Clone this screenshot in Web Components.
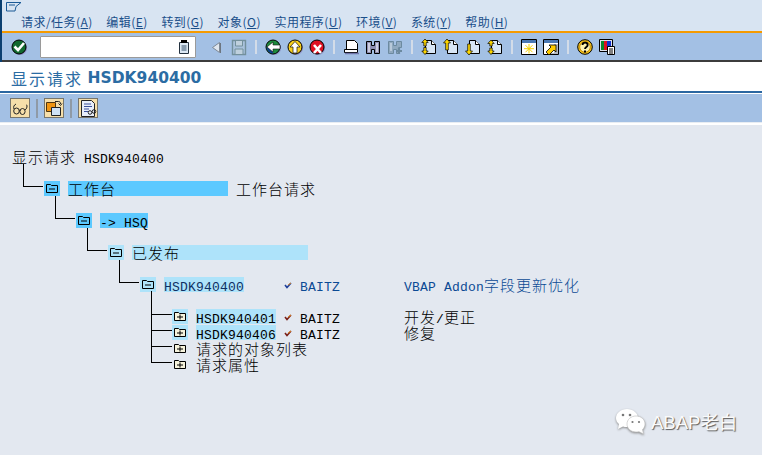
<!DOCTYPE html>
<html lang="zh">
<head>
<meta charset="utf-8">
<title>显示请求</title>
<style>
  html, body { margin: 0; height: 100%; background: #e3e8f0; overflow: hidden; }
</style>
</head>
<body>
<sap-window>
  <sap-menubar slot="top">
    <sap-menu>请求/任务(<u>A</u>)</sap-menu>
    <sap-menu>编辑(<u>E</u>)</sap-menu>
    <sap-menu>转到(<u>G</u>)</sap-menu>
    <sap-menu>对象(<u>O</u>)</sap-menu>
    <sap-menu>实用程序(<u>U</u>)</sap-menu>
    <sap-menu>环境(<u>V</u>)</sap-menu>
    <sap-menu>系统(<u>Y</u>)</sap-menu>
    <sap-menu>帮助(<u>H</u>)</sap-menu>
  </sap-menubar>

  <sap-toolbar slot="top">
    <sap-icon name="ok"></sap-icon>
    <sap-command></sap-command>
    <sap-icon name="tri" style="margin-left:7px"></sap-icon>
    <sap-icon name="save"></sap-icon>
    <sap-sep></sap-sep>
    <sap-icon name="back"></sap-icon>
    <sap-icon name="up"></sap-icon>
    <sap-icon name="cancel"></sap-icon>
    <sap-sep></sap-sep>
    <sap-icon name="print"></sap-icon>
    <sap-icon name="find"></sap-icon>
    <sap-icon name="findnext"></sap-icon>
    <sap-sep></sap-sep>
    <sap-icon name="first"></sap-icon>
    <sap-icon name="prev"></sap-icon>
    <sap-icon name="next"></sap-icon>
    <sap-icon name="last"></sap-icon>
    <sap-sep></sap-sep>
    <sap-icon name="session"></sap-icon>
    <sap-icon name="shortcut"></sap-icon>
    <sap-sep></sap-sep>
    <sap-icon name="help"></sap-icon>
    <sap-icon name="layout"></sap-icon>
  </sap-toolbar>

  <sap-title>显示请求 <b>HSDK940400</b></sap-title>

  <sap-appbar>
    <sap-button name="glasses"></sap-button>
    <sap-sep dark></sap-sep>
    <sap-button name="swap"></sap-button>
    <sap-sep dark></sap-sep>
    <sap-button name="docglasses"></sap-button>
  </sap-appbar>

  <sap-tree>
    <tree-row>
      <tree-cell col="0" span="30"><tree-han>显示请求</tree-han> HSDK940400</tree-cell>
    </tree-row>
    <tree-row></tree-row>

    <tree-row>
      <tree-link col="1" width="20" rise="17" height="22"></tree-link>
      <tree-cell col="4" span="2" tone="strong"><sap-icon name="folder"></sap-icon></tree-cell>
      <tree-cell col="7" span="20" tone="strong"><tree-han>工作台</tree-han></tree-cell>
      <tree-cell col="28" span="20"><tree-han>工作台请求</tree-han></tree-cell>
    </tree-row>
    <tree-row></tree-row>

    <tree-row>
      <tree-link col="5" width="20" rise="17" height="22"></tree-link>
      <tree-cell col="8" span="2" tone="strong"><sap-icon name="folder"></sap-icon></tree-cell>
      <tree-cell col="11" span="6" tone="strong">-&gt; HSQ</tree-cell>
    </tree-row>
    <tree-row></tree-row>

    <tree-row>
      <tree-link col="9" width="20" rise="17" height="22"></tree-link>
      <tree-cell col="12" span="2" tone="light"><sap-icon name="folder"></sap-icon></tree-cell>
      <tree-cell col="15" span="22" tone="light"><tree-han>已发布</tree-han></tree-cell>
    </tree-row>
    <tree-row></tree-row>

    <tree-row>
      <tree-link col="13" width="20" rise="17" height="22"></tree-link>
      <tree-cell col="16" span="2" tone="light"><sap-icon name="folder"></sap-icon></tree-cell>
      <tree-cell col="19" span="10" tone="light" ink="#0d2f63">HSDK940400</tree-cell>
      <tree-cell col="34" span="1"><sap-icon name="tickblue"></sap-icon></tree-cell>
      <tree-cell col="36" span="5" ink="#0b4a94">BAITZ</tree-cell>
      <tree-cell col="49" span="26" ink="#0b4a94">VBAP Addon<tree-han>字段更新优化</tree-han></tree-cell>
    </tree-row>
    <tree-row></tree-row>

    <tree-row>
      <tree-link col="17" width="21" rise="18" height="23"></tree-link>
      <tree-cell col="20" span="2" tone="light"><sap-icon name="folderplus"></sap-icon></tree-cell>
      <tree-cell col="23" span="10" tone="light">HSDK940401</tree-cell>
      <tree-cell col="34" span="1"><sap-icon name="tickred"></sap-icon></tree-cell>
      <tree-cell col="36" span="5">BAITZ</tree-cell>
      <tree-cell col="49" span="10"><tree-han>开发</tree-han>/<tree-han>更正</tree-han></tree-cell>
    </tree-row>
    <tree-row>
      <tree-link col="17" width="21" rise="11" height="16"></tree-link>
      <tree-cell col="20" span="2" tone="light"><sap-icon name="folderplus"></sap-icon></tree-cell>
      <tree-cell col="23" span="10" tone="light">HSDK940406</tree-cell>
      <tree-cell col="34" span="1"><sap-icon name="tickred"></sap-icon></tree-cell>
      <tree-cell col="36" span="5">BAITZ</tree-cell>
      <tree-cell col="49" span="10"><tree-han>修复</tree-han></tree-cell>
    </tree-row>
    <tree-row>
      <tree-link col="17" width="21" rise="11" height="16"></tree-link>
      <tree-cell col="20" span="2"><sap-icon name="folderplus"></sap-icon></tree-cell>
      <tree-cell col="23" span="20"><tree-han>请求的对象列表</tree-han></tree-cell>
    </tree-row>
    <tree-row>
      <tree-link col="17" width="21" rise="11" height="16"></tree-link>
      <tree-cell col="20" span="2"><sap-icon name="folderplus"></sap-icon></tree-cell>
      <tree-cell col="23" span="20"><tree-han>请求属性</tree-han></tree-cell>
    </tree-row>
  </sap-tree>

  <wechat-mark>ABAP老白</wechat-mark>
</sap-window>

<script>
const K = 'stroke="#000" stroke-width="1"';
const pageShape = 'M4.5 1.5h6l4 4v9h-10z';
const fold = '<path d="M10.5 1.5v4h4" fill="#fff" stroke="#000"/>';
const ICONS = {
  ok: `<circle cx="9" cy="9" r="7" fill="#8b8fc4"/><circle cx="8" cy="8" r="7" fill="#11692f" ${K}/><path d="M3.500 7.500l3.500 3.500 6-7" fill="none" stroke="#fff" stroke-width="2.600"/>`,
  tri: `<path d="M10.500 3.500v10l-7-5z" fill="#dfe6ee" stroke="#7d8894"/><path d="M11.500 4v10" stroke="#6d7680"/>`,
  save: `<path d="M1.500 1.500h13v14h-13z" fill="#a9c2dc" stroke="#73909c" stroke-width="1.400"/><path d="M4.500 2v5h7V2M4 15v-5h8v5" fill="#bfd0dd" stroke="#73909c"/>`,
  back: `<circle cx="9" cy="9" r="7" fill="#8b8fc4"/><circle cx="8" cy="8" r="7" fill="#1d8a3c" ${K}/><path d="M1.500 8a6.500 6.500 0 0 0 6.500 6.500V8z" fill="#0b3f86"/><path d="M2 8l6-5v3h7v4H8v3z" fill="#fff" stroke="#111" stroke-width=".6"/>`,
  up: `<circle cx="9" cy="9" r="7" fill="#8b8fc4"/><circle cx="8" cy="8" r="7" fill="#f8cf1c" ${K}/><path d="M8 2.500l5 5.500h-3v6H6V8H3z" fill="#fff" stroke="#111" stroke-width=".7"/>`,
  cancel: `<circle cx="9" cy="9" r="7" fill="#8b8fc4"/><circle cx="8" cy="8" r="7" fill="#df1122" ${K}/><path d="M5 6l7 8M12 6l-7 8" stroke="#fff" stroke-width="2.600"/>`,
  print: `<path d="M3.500 1.500h8l3 3v7h-11z" fill="#fff" ${K}/><path d="M1.500 10.500h13v3h-13z" fill="#fff" ${K}/><path d="M2 14.500h14" stroke="#6f74a8" stroke-width="1.500"/>`,
  find: `<path d="M1.500 2.500h5v4h3v-4h5v12h-5v-4h-3v4h-5z" fill="#8d8db0" ${K}/><path d="M4 4v9M12 4v9" stroke="#e8e8f2" stroke-width="1.400"/>`,
  findnext: `<path d="M1.500 2.500h5v4h3v-4h5v6h-3v6h-2v-4h-3v4h-5z" fill="#90a9bf" stroke="#6c8aa0"/><path d="M12 9v6M9 12h6" stroke="#6c8aa0" stroke-width="2.200"/><path d="M4 4v8" stroke="#cbd8e5" stroke-width="1.400"/>`,
  first: `<path d="${pageShape}" fill="#d8e6f5" ${K}/>${fold}<path d="M4 0L.8 3.500h2V7h2.400V3.500h2zM4 15.500L.8 12h2V8.500h2.400V12h2z" fill="#ffd800" stroke="#000" stroke-width=".7"/>`,
  prev: `<path d="${pageShape}" fill="#d8e6f5" ${K}/>${fold}<path d="M4 0L.5 4h2.200v7h2.600V4h2.200z" fill="#ffd800" stroke="#000" stroke-width=".7"/>`,
  next: `<path d="${pageShape}" fill="#d8e6f5" ${K}/>${fold}<path d="M4 16L.5 12h2.200V5h2.600v7h2.200z" fill="#ffd800" stroke="#000" stroke-width=".7"/>`,
  last: `<path d="${pageShape}" fill="#d8e6f5" ${K}/>${fold}<path d="M4 1L.8 4.500h2V7h2.400V4.500h2zM4 15.500L.8 12h2V9h2.400v3h2z" fill="#ffd800" stroke="#000" stroke-width=".7"/>`,
  session: `<path d="M.5.500h15v15H.5z" fill="#fff" ${K}/><path d="M1 1h14v3H1z" fill="#4a78b4"/><path d="M8 5v9.500M3 9.700h10M4.500 6.200l7 7M11.500 6.200l-7 7" stroke="#f5d000"/>`,
  shortcut: `<path d="M.5.500h15v15H.5z" fill="#fff" ${K}/><path d="M1 1h14v3H1z" fill="#4a78b4"/><path d="M11 5h4v10H5v-1h6z" fill="#b5b9c0"/><path d="M3 13l5-5-2-2h7v7l-2-2-5 5z" fill="#fc0" stroke="#000" stroke-width=".8"/>`,
  help: `<circle cx="8" cy="8" r="7.300" fill="#f8c61c" ${K}/><circle cx="8" cy="8" r="5.300" fill="#fff3b0" stroke="#c48800"/><path d="M5.500 6c0-3.200 5.200-3.200 5.200 0 0 2-2.700 2-2.700 4" fill="none" stroke="#000" stroke-width="1.800"/><path d="M7 11.500h2v2H7z"/>`,
  layout: `<path d="M.5.500h13v12H.5z" fill="#dfe3ee" ${K}/><path d="M2 2h3v9H2z" fill="#0a8a2a"/><path d="M5 2h3v9H5z" fill="#e01020"/><path d="M8 2h4v9H8z" fill="#1030d0"/><path d="M8.500 7.500h7v8h-7z" fill="#fff" ${K}/><path d="M10 10h4M10 12h4M10 14h4" stroke="#000"/>`,
  doc: `<path d="M3.500 3.500h9v11h-9z" fill="#dce8f4" stroke="#23313f"/><path d="M5 1h6v3H5z" fill="#000"/><path d="M5.500 7h5M5.500 9h5M5.500 11h5" stroke="#35506a"/>`,
  glasses: `<ellipse cx="5.500" cy="12" rx="2.800" ry="3" fill="none" stroke="#222"/><ellipse cx="11.500" cy="12.500" rx="2.600" ry="3" fill="none" stroke="#222"/><path d="M8.300 11.500c.5-.6 .8-.6 1 0M3 10c-1-2 0-4 2-5M14 11c1.500-1 2-2.500 2-4 0-1-.5-1-1-1" fill="none" stroke="#222"/>`,
  swap: `<path d="M1.500 3.500h9v9h-9z" fill="#f09410" stroke="#4d3510"/><path d="M6.500 8.500h9v8h-9z" fill="#cfe2f5" stroke="#222"/><path d="M10 2.500h3.500c1.500 0 2 1 2 2.500M13.500 4.500l2 2 1.500-2" fill="none" stroke="#222"/>`,
  docglasses: `<path d="M2.500 1.500h10l3 3v13h-13z" fill="#e8eefa" stroke="#222"/><path d="M5 5h7M5 7.500h8M5 10h5M5 12.500h4" stroke="#3a4f9a"/><circle cx="11" cy="13.500" r="1.800" fill="none" stroke="#222"/><circle cx="15" cy="12.500" r="1.800" fill="none" stroke="#222"/>`,
  folder: `<path d="M2.500 3.500h4l1 1h6v7h-11z" fill="none" ${K}/><path d="M5 8h6" stroke="#000"/>`,
  folderplus: `<path d="M2.500 3.500h4l1 1h6v7h-11z" fill="#f6f3dc" ${K}/><path d="M5 8h6M8 5.500v5" stroke="#000"/>`,
  tickblue: `<path d="M1 8l2 2.500L7 6" fill="none" stroke="#1f3f9a" stroke-width="1.600"/><path d="M4 8l3-2" stroke="#e08a20"/>`,
  tickred: `<path d="M1 8l2 2.500L7 6" fill="none" stroke="#7a2018" stroke-width="1.600"/><path d="M4 8l3-2" stroke="#e08a20"/>`
};

// tiny helper so each element just states its css and markup
class Shadowed extends HTMLElement {
  constructor(html) {
    super();
    this.attachShadow({ mode: 'open' }).innerHTML = html;
  }
}

class SapWindow extends Shadowed {
  constructor() {
    super(`<style>
      :host{ display:flex; flex-direction:column; position:relative; width:762px; height:455px; overflow:hidden; background:#e3e8f0; }
      .top{ display:flex; flex-direction:column; border-left:2px solid #0b3f70; }
    </style><div class="top"><slot name="top"></slot></div><slot></slot>`);
  }
}

class SapMenubar extends Shadowed {
  constructor() {
    super(`<style>
      :host{ display:flex; flex-direction:column; height:31px; background:#d8e4f2; border-bottom:2px solid #f59a00; }
      svg{ display:block; margin:2px 0 0 4px; }
      .items{ display:flex; gap:13.6px; padding:1px 0 0 19px; height:18px; align-items:center; }
    </style>
    <svg width="16" height="10" viewBox="0 0 16 10"><path d="M.5.500h14.500l-5 4 -1 4.500H.5z" fill="none" stroke="#1c5a96"/><path d="M3 3h6" stroke="#1c5a96"/></svg>
    <div class="items"><slot></slot></div>`);
  }
}

class SapMenu extends Shadowed {
  constructor() {
    super(`<style>
      :host{ display:block; font:12px/16px "Noto Sans CJK SC","Liberation Sans",sans-serif; letter-spacing:.45px; color:#1a4f8a; white-space:nowrap; }
    </style><slot></slot>`);
  }
}

class SapToolbar extends Shadowed {
  constructor() {
    super(`<style>
      :host{ display:flex; align-items:center; gap:6px; height:27px; padding-left:9px; background:#a3c0e4; border-bottom:2px solid #3c3c3c; }
    </style><slot></slot>`);
  }
}

class SapCommand extends Shadowed {
  constructor() {
    super(`<style>
      :host{ display:flex; align-items:center; justify-content:flex-end; box-sizing:border-box; width:156px; height:22px; margin-left:7px; padding-right:3px; background:#fff; border:1px solid #9a9a9a; border-radius:1px; }
    </style><sap-icon name="doc"></sap-icon>`);
  }
}

class SapIcon extends Shadowed {
  constructor() {
    super(`<style>
      :host{ display:block; flex:none; width:16px; height:16px; line-height:0; }
      svg{ display:block; overflow:visible; }
    </style><svg width="16" height="16" viewBox="0 0 16 16"></svg>`);
  }
  connectedCallback() {
    this.shadowRoot.querySelector('svg').innerHTML = ICONS[this.getAttribute('name')] || '';
  }
}

class SapSep extends Shadowed {
  constructor() {
    super(`<style>
      :host{ display:block; flex:none; width:2px; height:14px; margin:0 2px; background:#d3dce8; }
      :host([dark]){ height:19px; margin:0; background:#8f9aa6; }
    </style>`);
  }
}

class SapTitle extends Shadowed {
  constructor() {
    super(`<style>
      :host{ display:flex; align-items:center; box-sizing:content-box; height:27px; padding:2px 0 0 11px; background:#fff; border-bottom:2px solid #2a66a0; box-shadow:0 1px 0 #fff; white-space:pre;
        font:16px "Noto Sans CJK SC",sans-serif; letter-spacing:2px; color:#2b6ca3; }
      ::slotted(b){ font:bold 15.5px "DejaVu Sans",sans-serif; letter-spacing:0; margin-left:-1px; }
    </style><slot></slot>`);
  }
}

class SapAppbar extends Shadowed {
  constructor() {
    super(`<style>
      :host{ display:flex; align-items:center; gap:6px; height:28px; margin-top:1px; padding-left:10px; background:#a3c0e4; border-bottom:1px solid #e8edf3; box-shadow:0 2px 0 #fff; }
    </style><slot></slot>`);
  }
}

class SapButton extends Shadowed {
  constructor() {
    super(`<style>
      :host{ display:block; box-sizing:border-box; width:20px; height:20px; background:#f6dfaa; border:1px solid #77756c; line-height:0; }
      svg{ display:block; }
    </style><svg width="18" height="18" viewBox="0 0 18 18"></svg>`);
  }
  connectedCallback() {
    this.shadowRoot.querySelector('svg').innerHTML = ICONS[this.getAttribute('name')] || '';
  }
}

// list output keeps sap's character raster: 8px columns, 16px rows
class SapTree extends Shadowed {
  constructor() {
    super(`<style>
      :host{ display:block; padding:26px 0 0 12px; font:13px/15px "Liberation Mono",monospace; letter-spacing:.2px; color:#000; }
    </style><slot></slot>`);
  }
}

class TreeRow extends Shadowed {
  constructor() {
    super(`<style>
      :host{ display:grid; grid-template-columns:repeat(92,8px); grid-template-rows:16px; height:16px; white-space:pre; }
    </style><slot></slot>`);
  }
}

class TreeCell extends Shadowed {
  constructor() {
    super(`<style>
      :host{ display:block; box-sizing:border-box; height:15px; padding-top:3px; grid-row:1; overflow:visible; }
      :host([tone=strong]){ background:#5cc9ff; }
      :host([tone=light]){ background:#aee3fa; }
      ::slotted(sap-icon){ margin-top:-3px; }
    </style><slot></slot>`);
  }
  connectedCallback() {
    const col = +this.getAttribute('col') + 1;
    this.style.gridColumn = `${col} / span ${this.getAttribute('span')}`;
    if (this.hasAttribute('ink')) this.style.color = this.getAttribute('ink');
  }
}

class TreeHan extends Shadowed {
  constructor() {
    super(`<style>
      :host{ display:inline; font:15px/10px "Noto Sans CJK SC",sans-serif; font-weight:300; letter-spacing:1px; }
    </style><slot></slot>`);
  }
}

// elbow connector, reaches up from the row into the one above it
class TreeLink extends Shadowed {
  constructor() {
    super(`<style>
      :host{ display:block; box-sizing:border-box; grid-row:1; align-self:start; margin-left:3px; border-left:1px solid #000; border-bottom:1px solid #000; }
    </style>`);
  }
  connectedCallback() {
    const col = +this.getAttribute('col') + 1;
    this.style.gridColumn = `${col} / span 4`;
    this.style.width = this.getAttribute('width') + 'px';
    this.style.height = (+this.getAttribute('height') + 1) + 'px';
    this.style.marginTop = -this.getAttribute('rise') + 'px';
  }
}

class WechatMark extends Shadowed {
  constructor() {
    super(`<style>
      :host{ position:absolute; left:615px; top:405px; display:flex; align-items:center; gap:5px; height:32px;
        font:18.5px "Liberation Sans","Noto Sans CJK SC",sans-serif; color:#fafafa; text-shadow:1px 1px 1px #5a5a5a; white-space:nowrap; }
      svg{ filter:drop-shadow(0 1px 1px #8a8a8a); }
    </style>
    <svg width="31" height="30" viewBox="0 0 31 30">
      <path d="M12 3c6 0 11 4 11 9s-5 9-11 9c-1.500 0-3-.2-4-.6L3 23l1-5C2 16.500 1 14.500 1 12c0-5 5-9 11-9z" fill="#fff"/>
      <circle cx="8" cy="9" r="1.300" fill="#777"/><circle cx="15" cy="9" r="1.300" fill="#777"/>
      <path d="M21 10c5 0 9 3.500 9 8 0 2.200-1 4.200-2.500 5.500l1 4.500-4.500-2.300c-1 .2-2 .3-3 .3-5 0-9-3.500-9-8s4-8 9-8z" fill="#fff" stroke="#bbb" stroke-width=".6"/>
      <circle cx="17.500" cy="16" r="1.100" fill="#777"/><circle cx="24" cy="16" r="1.100" fill="#777"/>
    </svg><slot></slot>`);
  }
}

customElements.define('sap-icon', SapIcon);
customElements.define('sap-window', SapWindow);
customElements.define('sap-menubar', SapMenubar);
customElements.define('sap-menu', SapMenu);
customElements.define('sap-toolbar', SapToolbar);
customElements.define('sap-command', SapCommand);
customElements.define('sap-sep', SapSep);
customElements.define('sap-title', SapTitle);
customElements.define('sap-appbar', SapAppbar);
customElements.define('sap-button', SapButton);
customElements.define('sap-tree', SapTree);
customElements.define('tree-row', TreeRow);
customElements.define('tree-cell', TreeCell);
customElements.define('tree-han', TreeHan);
customElements.define('tree-link', TreeLink);
customElements.define('wechat-mark', WechatMark);
</script>
</body>
</html>
